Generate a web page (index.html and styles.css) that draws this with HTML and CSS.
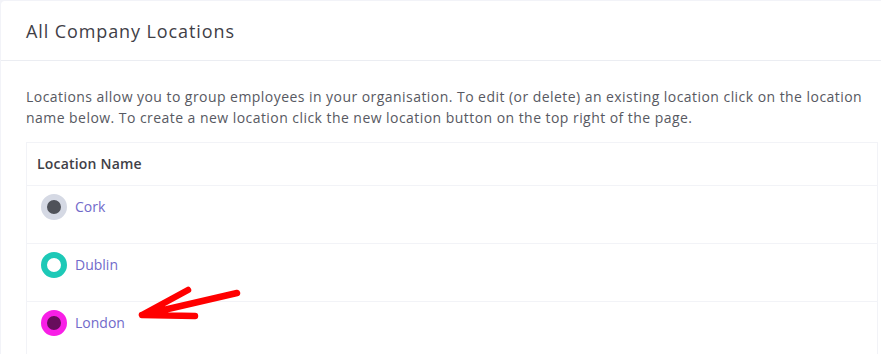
FILE: index.html
```html
<html>
<head>
<title>All Company Locations</title>
<link rel="stylesheet" href="styles.css">
</head>
<body>
<div class="page">
  <div class="portlet">
    <div class="portlet-head">
      <h3 class="portlet-title">All Company Locations</h3>
    </div>
    <div class="portlet-body">
      <p class="intro">Locations allow you to group employees in your organisation. To edit (or delete) an existing location click on the location name below. To create a new location click the new location button on the top right of the page.</p>
      <table class="locations">
        <tr><th>Location Name</th></tr>
        <tr><td><span class="marker marker-cork"></span><a href="#">Cork</a></td></tr>
        <tr><td><span class="marker marker-dublin"></span><a href="#">Dublin</a></td></tr>
        <tr><td><span class="marker marker-london"></span><a href="#">London</a></td></tr>
      </table>
    </div>
  </div>

  <!-- annotation arrow drawn over the screenshot -->
  <svg class="annotation" width="881" height="354" viewBox="0 0 881 354">
    <path d="M188 289 L142 314 L195 315 M142 314 L237 292" fill="none" stroke="#ff0000" stroke-width="6.5" stroke-linecap="round" stroke-linejoin="round"/>
  </svg>
</div>
</body>
</html>
```

FILE: styles.css
```css
body {
margin: 0;
background: #f2f3f8;
font-family: "Open Sans", sans-serif;
font-size: 13px;
color: #575962;
overflow: hidden;
}
.page { position: relative; width: 881px; height: 354px; }

.portlet {
margin: 1px 0 0 1px;
width: 902px;
background: white;
border-radius: 4px;
}
.portlet-head {
height: 59px;
padding: 0 25px;
display: flex;
align-items: center;
border-bottom: 1px solid #ebedf2;
}
.portlet-title {
margin: 0;
font-size: 18px;
font-weight: 500;
letter-spacing: 0.9px;
color: #3f4047;
}
.portlet-body { padding: 25px; }

p.intro {
margin: 0 0 14px 0;
width: 845px;
font-size: 14px;
letter-spacing: 0.45px;
line-height: 21px;
}

table.locations { border-collapse: collapse; width: 100%; }
table.locations th,
table.locations td {
border: 1px solid #f2f3f7;
text-align: left;
vertical-align: top;
}
table.locations th { padding: 11px 10px 12px; font-weight: 600; font-size: 14px; letter-spacing: 0.2px; color: #3f4047; line-height: 19px; }
table.locations td { padding: 8px 10px 23px 14px; height: 26px; }
table.locations td a { display: inline-block; line-height: 26px; vertical-align: top; font-size: 14px; color: #716aca; text-decoration: none; }

.marker {
display: inline-block;
box-sizing: border-box;
width: 26px;
height: 26px;
border-radius: 50%;
border: 6.5px solid;
margin-right: 8px;
vertical-align: top;
}
.marker-cork { border-color: #d5d9e4; background: #4f5259; }
.marker-dublin { border-color: #1dc9b7; background: white; }
.marker-london { border-color: #f81fe6; background: #670d5c; }

.annotation { position: absolute; left: 0; top: 0; pointer-events: none; }
```
